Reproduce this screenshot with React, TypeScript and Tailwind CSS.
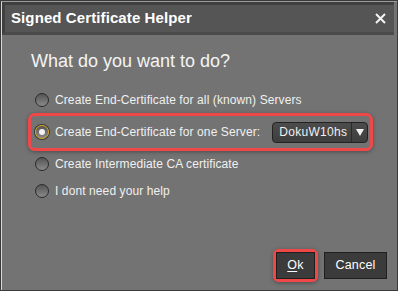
import { useState } from 'react';

const OPTIONS = [
  { id: 'all', label: 'Create End-Certificate for all (known) Servers' },
  { id: 'one', label: 'Create End-Certificate for one Server:' },
  { id: 'ca', label: 'Create Intermediate CA certificate' },
  { id: 'none', label: 'I dont need your help' },
];

function Radio({ checked }: { checked: boolean }) {
  return (
    <span
      className={`flex h-[14px] w-[14px] shrink-0 items-center justify-center rounded-full border ${
        checked ? 'border-[#d9a520] shadow-[0_0_0_1px_#3a3a3a]' : 'border-[#2a2a2a]'
      } bg-gradient-to-b from-[#555555] to-[#8a8a8a]`}
    >
      {checked && <span className="h-[6px] w-[6px] rounded-full bg-[#f2f2f2]" />}
    </span>
  );
}

export default function App() {
  const [choice, setChoice] = useState('one');

  return (
    <div
      className="flex h-[291px] w-[398px] flex-col border border-[#3a3a3a] bg-[#3a3a3a] text-white"
      style={{ fontFamily: '"Liberation Sans", Arial, sans-serif' }}
    >
      <div className="flex flex-1 flex-col border-l border-t border-l-[#d8d8d8] border-t-[#9a9a9a] bg-[#737373] pr-[3px]">
        {/* title bar */}
        <div className="border-[3px] border-r-0 border-[#404040] border-b-[#4a4a4a]">
          <div className="flex h-[27px] items-center justify-between bg-[#555555] pl-[6px] pr-[8px]">
            <span className="text-[15px] font-bold tracking-[0.1px]">Signed Certificate Helper</span>
            <svg width="11" height="11" viewBox="0 0 11 11" className="mt-[-1px]">
              <path d="M1 1 L10 10 M10 1 L1 10" stroke="#f4f4f4" strokeWidth="2" />
            </svg>
          </div>
        </div>

        <div className="flex flex-1 flex-col pl-[29px] pr-[7px]">
          <h1 className="mt-[15px] text-[18px] leading-[22px] text-[#f4f4f4]">What do you want to do?</h1>

          <div className="mt-[15px] flex flex-col whitespace-nowrap text-[12px] tracking-[0.1px] text-[#f0f0f0]">
            <button onClick={() => setChoice('all')} className="flex h-[26px] items-center gap-[6px] pl-[4px] text-left">
              <Radio checked={choice === 'all'} />
              <span>{OPTIONS[0].label}</span>
            </button>

            <div className="ml-[-3px] mr-[14px] flex h-[38px] items-center rounded-[7px] border-[3px] border-[#f04848] shadow-[0_1px_4px_rgba(0,0,0,0.35)]">
              <button onClick={() => setChoice('one')} className="flex items-center gap-[6px] pl-[4px] text-left">
                <Radio checked={choice === 'one'} />
                <span>{OPTIONS[1].label}</span>
              </button>
              <div className="ml-[12px] flex h-[21px] w-[96px] shrink-0 items-stretch rounded-[4px] border border-[#222222] bg-gradient-to-b from-[#4c4c4c] to-[#3e3e3e] text-[12px] tracking-[0.3px]">
                <span className="flex flex-1 items-center pl-[6px]">DokuW10hs</span>
                <span className="flex w-[16px] items-center justify-center border-l border-[#2a2a2a]">
                  <svg width="8" height="7" viewBox="0 0 8 7">
                    <path d="M0 0 H8 L4 7 Z" fill="#f0f0f0" />
                  </svg>
                </span>
              </div>
            </div>

            <button onClick={() => setChoice('ca')} className="flex h-[26px] items-center gap-[6px] pl-[4px] text-left">
              <Radio checked={choice === 'ca'} />
              <span>{OPTIONS[2].label}</span>
            </button>
            <button onClick={() => setChoice('none')} className="flex h-[28px] items-center gap-[6px] pl-[4px] text-left">
              <Radio checked={choice === 'none'} />
              <span>{OPTIONS[3].label}</span>
            </button>
          </div>

          <div className="mt-auto mb-[8px] flex items-center justify-end gap-[6px] text-[12.5px] tracking-[0.2px]">
            <div className="rounded-[6px] border-[3px] border-[#f04848] shadow-[0_1px_4px_rgba(0,0,0,0.35)]">
              <button className="h-[27px] w-[39px] border border-[#1f1f1f] bg-[#3b3b3b]">
                <span className="underline underline-offset-2">O</span>k
              </button>
            </div>
            <button className="h-[27px] w-[63px] border border-[#1f1f1f] bg-[#3b3b3b]">Cancel</button>
          </div>
        </div>
      </div>
    </div>
  );
}
